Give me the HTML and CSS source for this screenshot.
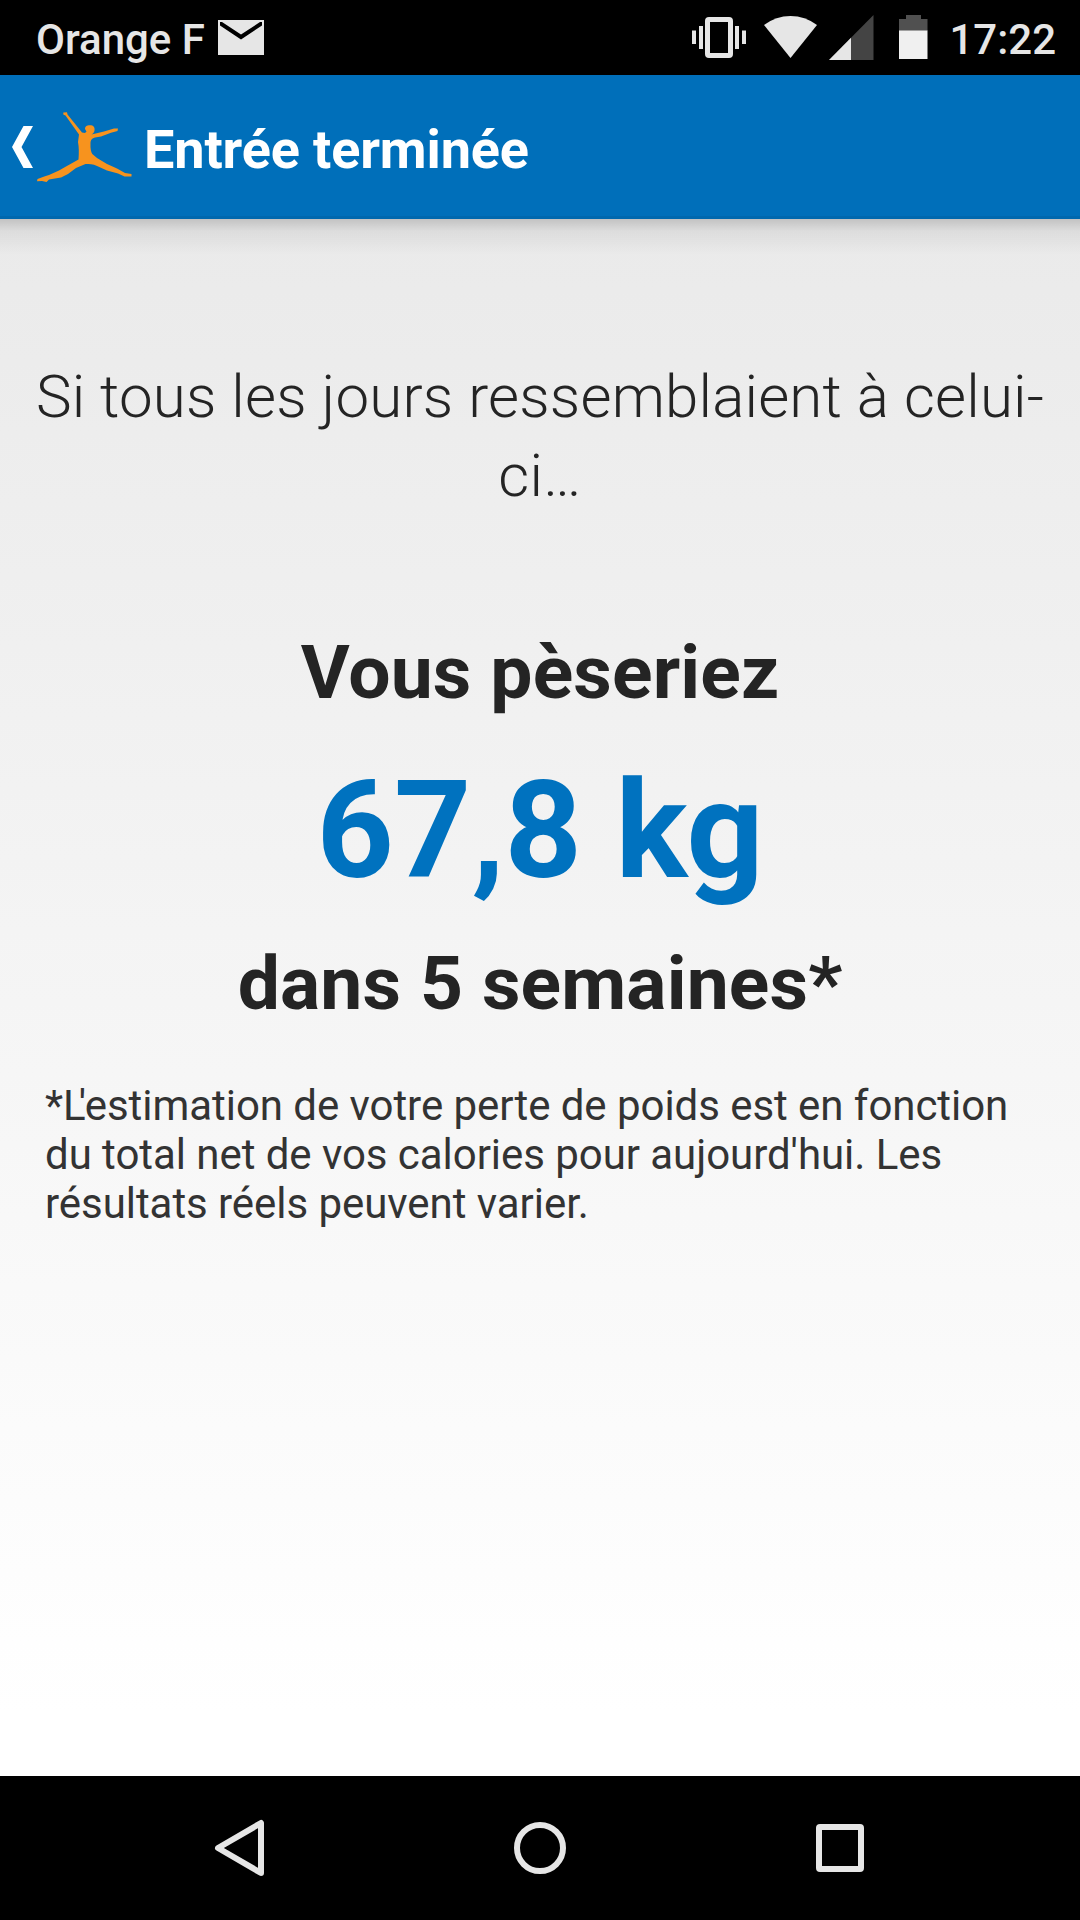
FILE: index.html
```
<!DOCTYPE html>
<html lang="fr">
<head>
  <meta charset="UTF-8">
  <meta name="viewport" content="width=device-width, initial-scale=1.0">
  <title>Entrée terminée</title>
  <link rel="stylesheet" href="styles.css">
</head>
<body>
  <div class="screen">
    <div class="status-bar">
      <span class="carrier">Orange F</span>
      <svg class="mail-icon" width="46" height="35" viewBox="0 0 46 35">
        <rect width="46" height="35" fill="#e6e6e6"/>
        <path d="M2 2v3.500l21 14 21-14V2h-2L23 14.500 4 2z" fill="#000"/>
      </svg>
      <!-- vibrate, wifi, signal, battery -->
      <svg class="status-icons" width="240" height="48" viewBox="0 0 240 48">
        <g fill="#e6e6e6">
          <path fill-rule="evenodd" d="M17 2h20a4 4 0 0 1 4 4v33a4 4 0 0 1-4 4H17a4 4 0 0 1-4-4V6a4 4 0 0 1 4-4zM18 7v31h18V7z"/>
          <path d="M0 15.500h4v13.500H0zM7 11h4v23H7zM43 11h4v23h-4zM50 15.500h4v13.500h-4z"/>
          <path d="M72 10Q84 1 98.500 1T125 10L98.500 43z"/>
        </g>
        <path d="M181.500 0v45H137z" fill="#444"/>
        <path d="M159 22.700V45h-22z" fill="#e6e6e6"/>
        <path d="M214 0h15v4h6.500v12H207V4h7z" fill="#505050"/>
        <path d="M207 15.500h28.500V44H207z" fill="#f0f0f0"/>
      </svg>
      <span class="clock">17:22</span>
    </div>

    <header class="action-bar">
      <svg class="back-icon" width="21" height="42" viewBox="0 0 21 42">
        <path d="M11.500 0H21L9.500 21 21 42h-9.500L0 21z" fill="#fff"/>
      </svg>
      <svg class="app-logo" width="95" height="71" viewBox="0 0 95 71">
        <path fill="#f7931e" d="M26.300 0.500 30 0.300 30.500 2.500 45 20.500 48 21 49.500 19.500 48 17C48 13.500 51 13.300 54 13.300 57.500 13.600 58 17 57.400 19 57 21 55.500 22 54.500 22.500L67 19.500 77 16.500 81 16.500 80.500 19 74 20.700 64 24.500 58 25.500C54 26.500 53.500 29 53.500 32 53.200 36 54 40 55.300 42L60 46 70 52 80 56.500 88 61 94.500 62 94.500 64.500 87.500 64.500 81 61.500 70 58.500 60 54C56 52 52 52 48.500 52L39 56 31 62 24 65.500 12 67.500 9.500 70 5 69 0 69.300 0.500 67 8 64.300 12 63 22 58.500 29 54.500 41.500 47.500C42 41 42 35 41 30L42 22.500 28.500 3.500 26.300 2.500z"/>
      </svg>
      <h1 class="title">Entrée terminée</h1>
    </header>

    <main class="content">
      <p class="intro">Si tous les jours ressemblaient à celui-ci…</p>
      <p class="label label-weight">Vous pèseriez</p>
      <p class="weight">67,8 kg</p>
      <p class="label label-weeks">dans 5 semaines*</p>
      <p class="note">*<span class="kern">L</span>'estimation de votre perte de poids est en fonction du total net de vos calories pour aujourd'hui. Les résultats réels peuvent varier.</p>
    </main>

    <nav class="nav-bar">
      <svg class="nav-icon" width="60" height="60" viewBox="0 0 60 60">
        <path d="M51 5v50L8 30z"/>
      </svg>
      <svg class="nav-icon" width="60" height="60" viewBox="0 0 60 60">
        <circle cx="30" cy="30" r="23"/>
      </svg>
      <svg class="nav-icon" width="60" height="60" viewBox="0 0 60 60">
        <rect x="9" y="9" width="42" height="42" rx="1"/>
      </svg>
    </nav>
  </div>
</body>
</html>
```
FILE: styles.css
```
:root {
  --blue: #006fba;
  --value-blue: #0072bf;
  --icon: #e6e6e6;
  --text: #242424;
}

* {
  box-sizing: border-box;
}

body {
  margin: 0;
  font-family: Roboto, sans-serif;
  color: var(--text);
}

h1, p {
  margin: 0;
}

svg {
  display: block;
  flex: none;
}

.screen {
  display: flex;
  flex-direction: column;
  width: 1080px;
  height: 1920px;
  overflow: hidden;
}

/* Status bar */
.status-bar {
  display: flex;
  align-items: flex-start;
  height: 75px;
  padding: 15px 24px 0 36px;
  background: #000;
  color: var(--icon);
  font-size: 42px;
  font-weight: 500;
  line-height: 50px;
}

.mail-icon {
  margin: 5px 0 0 13px;
}

.status-icons {
  margin-left: auto;
}

.clock {
  margin-left: 17px;
}

/* Action bar */
.action-bar {
  display: flex;
  align-items: flex-start;
  height: 144px;
  padding: 43px 12px 0;
  background: var(--blue);
  border-bottom: 3px solid #0068ae;
}

.back-icon {
  margin-top: 8px;
}

.app-logo {
  margin: -6px 0 0 4px;
}

.title {
  margin-left: 12px;
  color: #fff;
  font-size: 54px;
  font-weight: 700;
  line-height: 64px;
  letter-spacing: -0.13px;
}

/* Result */
.content {
  flex: 1;
  padding: 138px 24px 0;
  background:
    linear-gradient(rgba(0, 0, 0, 0.17), rgba(0, 0, 0, 0.06) 12px, rgba(0, 0, 0, 0) 36px),
    linear-gradient(#eaeaea, #fff 96%);
  text-align: center;
}

.intro {
  font-size: 60px;
  font-weight: 300;
  line-height: 79px;
  letter-spacing: 0.18px;
}

.label {
  font-size: 75px;
  font-weight: 700;
  line-height: 88px;
  letter-spacing: 0.15px;
}

.label-weight {
  margin-top: 113px;
}

.weight {
  margin-top: 36px;
  color: var(--value-blue);
  font-size: 135px;
  font-weight: 700;
  line-height: 158px;
}

.label-weeks {
  margin-top: 29px;
}

.note {
  margin: 54px 21px 0;
  color: #333;
  font-size: 42px;
  line-height: 49px;
  letter-spacing: -0.05px;
  text-align: left;
}

.kern {
  letter-spacing: -7px;
}

/* Navigation bar */
.nav-bar {
  display: flex;
  justify-content: center;
  align-items: center;
  gap: 240px;
  height: 144px;
  background: #000;
}

.nav-icon {
  fill: none;
  stroke: var(--icon);
  stroke-width: 6;
  stroke-linejoin: round;
}
```
